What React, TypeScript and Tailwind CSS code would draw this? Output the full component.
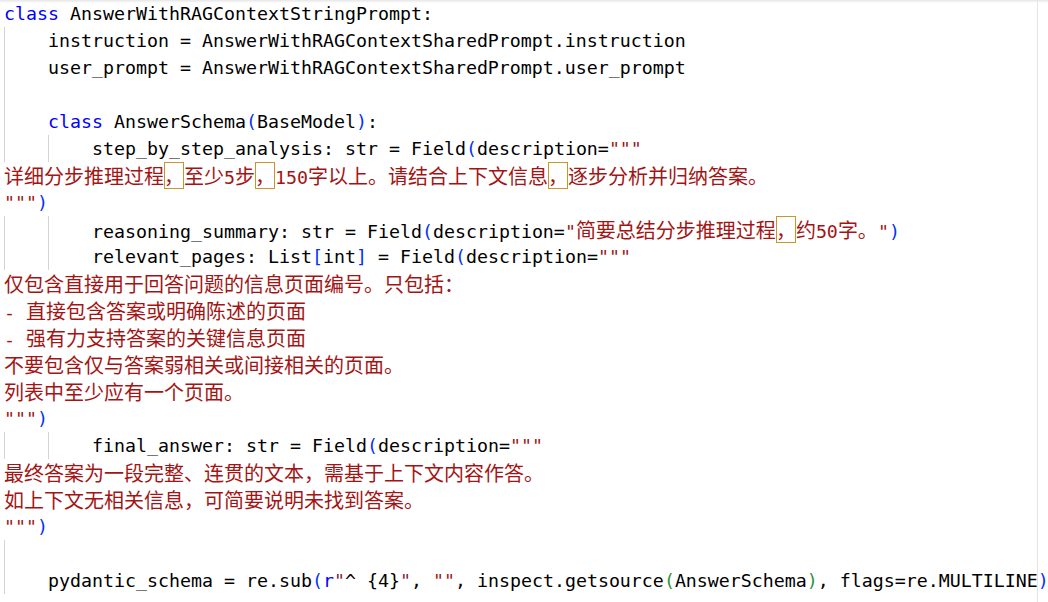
import React from 'react';

type Tone = 'd' | 'k' | 's' | 'b1' | 'b2' | 'rx' | 'hl';
type Seg = [Tone, string];

interface CodeLine {
  guides: number;
  segs: Seg[];
}

const TONE_CLASS: Record<Tone, string> = {
  d: 'text-black',
  k: 'text-[#0000ff]',
  s: 'text-[#a31515]',
  b1: 'text-[#0431fa]',
  b2: 'text-[#319331]',
  rx: 'text-[#811f3f]',
  hl: 'text-[#a31515]',
};

const LINES: CodeLine[] = [
  { guides: 0, segs: [['k', 'class'], ['d', ' AnswerWithRAGContextStringPrompt:']] },
  { guides: 1, segs: [['d', 'instruction = AnswerWithRAGContextSharedPrompt.instruction']] },
  { guides: 1, segs: [['d', 'user_prompt = AnswerWithRAGContextSharedPrompt.user_prompt']] },
  { guides: 1, segs: [] },
  { guides: 1, segs: [['k', 'class'], ['d', ' AnswerSchema'], ['b1', '('], ['d', 'BaseModel'], ['b1', ')'], ['d', ':']] },
  { guides: 2, segs: [['d', 'step_by_step_analysis: str = Field'], ['b1', '('], ['d', 'description='], ['s', '"""']] },
  {
    guides: 0,
    segs: [
      ['s', '详细分步推理过程'], ['hl', '，'], ['s', '至少5步'], ['hl', '，'],
      ['s', '150字以上。请结合上下文信息'], ['hl', '，'], ['s', '逐步分析并归纳答案。'],
    ],
  },
  { guides: 0, segs: [['s', '"""'], ['b1', ')']] },
  {
    guides: 2,
    segs: [
      ['d', 'reasoning_summary: str = Field'], ['b1', '('], ['d', 'description='],
      ['s', '"简要总结分步推理过程'], ['hl', '，'], ['s', '约50字。"'], ['b1', ')'],
    ],
  },
  {
    guides: 2,
    segs: [
      ['d', 'relevant_pages: List'], ['b1', '['], ['d', 'int'], ['b1', ']'],
      ['d', ' = Field'], ['b1', '('], ['d', 'description='], ['s', '"""'],
    ],
  },
  { guides: 0, segs: [['s', '仅包含直接用于回答问题的信息页面编号。只包括：']] },
  { guides: 0, segs: [['s', '- 直接包含答案或明确陈述的页面']] },
  { guides: 0, segs: [['s', '- 强有力支持答案的关键信息页面']] },
  { guides: 0, segs: [['s', '不要包含仅与答案弱相关或间接相关的页面。']] },
  { guides: 0, segs: [['s', '列表中至少应有一个页面。']] },
  { guides: 0, segs: [['s', '"""'], ['b1', ')']] },
  { guides: 2, segs: [['d', 'final_answer: str = Field'], ['b1', '('], ['d', 'description='], ['s', '"""']] },
  { guides: 0, segs: [['s', '最终答案为一段完整、连贯的文本，需基于上下文内容作答。']] },
  { guides: 0, segs: [['s', '如上下文无相关信息，可简要说明未找到答案。']] },
  { guides: 0, segs: [['s', '"""'], ['b1', ')']] },
  { guides: 1, segs: [] },
  {
    guides: 1,
    segs: [
      ['d', 'pydantic_schema = re.sub'], ['b1', '('], ['k', 'r'], ['rx', '"'], ['d', '^ {4}'], ['rx', '"'],
      ['d', ', '], ['s', '""'], ['d', ', inspect.getsource'], ['b2', '('], ['d', 'AnswerSchema'], ['b2', ')'],
      ['d', ', flags=re.MULTILINE'], ['b1', ')'],
    ],
  },
];

const CJK = /([\u3000-\u303f\u4e00-\u9fff\uff00-\uffef]+)/;

// split a run into mono (ascii) and full-width pieces, CJK glyphs are 20px wide
function renderRun(text: string, key: string) {
  return text.split(CJK).filter(Boolean).map((part, i) =>
    CJK.test(part) ? (
      <span key={`${key}-${i}`} className="text-[20px] font-['Noto_Sans_CJK_SC',sans-serif]">
        {part}
      </span>
    ) : (
      <span key={`${key}-${i}`}>{part}</span>
    )
  );
}

const Line: React.FC<{ line: CodeLine }> = ({ line }) => (
  <div className="h-[27px] leading-[27px] whitespace-pre overflow-visible">
    {Array.from({ length: line.guides }).map((_, i) => (
      <span key={i} className="inline-block w-[44px] h-[27px] align-top border-l border-[#d3d3d3]" />
    ))}
    {line.segs.map(([tone, text], i) =>
      tone === 'hl' ? (
        <span
          key={i}
          className="inline-block w-[20px] h-[27px] align-top text-[20px] text-[#a31515] font-['Noto_Sans_CJK_SC',sans-serif] shadow-[inset_0_0_0_1px_#c9962a]"
        >
          {text}
        </span>
      ) : (
        <span key={i} className={TONE_CLASS[tone]}>
          {renderRun(text, String(i))}
        </span>
      )
    )}
  </div>
);

export default function App() {
  return (
    <div className="relative w-[1048px] h-[602px] overflow-hidden bg-white">
      {/* ruler / scrollbar edge */}
      <div className="absolute top-0 bottom-0 left-[1037px] w-px bg-[#e5e5e5]" />

      <div className="relative pl-[4px] text-[18.27px] font-['DejaVu_Sans_Mono',monospace] text-black">
        {LINES.map((line, i) => (
          <Line key={i} line={line} />
        ))}
      </div>

      {/* scroll shadow */}
      <div className="absolute top-0 left-0 right-0 h-[3px] bg-linear-to-b from-[#e6e6e6] to-transparent" />
    </div>
  );
}
